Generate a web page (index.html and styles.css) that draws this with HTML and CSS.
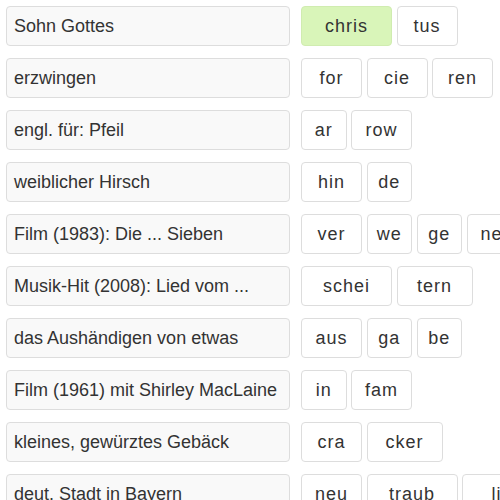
FILE: index.html
```html
<!DOCTYPE html>
<html lang="de">
<head>
<meta charset="utf-8">
<title>Silbenrätsel</title>
<link rel="stylesheet" href="styles.css">
</head>
<body>
<div class="puzzle">
  <div class="row">
    <div class="clue">Sohn Gottes</div>
    <div class="syllables"><span class="syl w5 used">chris</span><span class="syl w3">tus</span></div>
  </div>
  <div class="row">
    <div class="clue">erzwingen</div>
    <div class="syllables"><span class="syl w3">for</span><span class="syl w3">cie</span><span class="syl w3">ren</span></div>
  </div>
  <div class="row">
    <div class="clue">engl. für: Pfeil</div>
    <div class="syllables"><span class="syl w2">ar</span><span class="syl w3">row</span></div>
  </div>
  <div class="row">
    <div class="clue">weiblicher Hirsch</div>
    <div class="syllables"><span class="syl w3">hin</span><span class="syl w2">de</span></div>
  </div>
  <div class="row">
    <div class="clue">Film (1983): Die ... Sieben</div>
    <div class="syllables"><span class="syl w3">ver</span><span class="syl w2">we</span><span class="syl w2">ge</span><span class="syl w3">nen</span></div>
  </div>
  <div class="row">
    <div class="clue">Musik-Hit (2008): Lied vom ...</div>
    <div class="syllables"><span class="syl w5">schei</span><span class="syl w4">tern</span></div>
  </div>
  <div class="row">
    <div class="clue">das Aushändigen von etwas</div>
    <div class="syllables"><span class="syl w3">aus</span><span class="syl w2">ga</span><span class="syl w2">be</span></div>
  </div>
  <div class="row">
    <div class="clue">Film (1961) mit Shirley MacLaine</div>
    <div class="syllables"><span class="syl w2">in</span><span class="syl w3">fam</span></div>
  </div>
  <div class="row">
    <div class="clue">kleines, gewürztes Gebäck</div>
    <div class="syllables"><span class="syl w3">cra</span><span class="syl w4">cker</span></div>
  </div>
  <div class="row">
    <div class="clue">deut. Stadt in Bayern</div>
    <div class="syllables"><span class="syl w3">neu</span><span class="syl w5">traub</span><span class="syl w5">ling</span></div>
  </div>
</div>
</body>
</html>
```
FILE: styles.css
```css
html, body {
  margin: 0;
  padding: 0;
  background: #ffffff;
  overflow: hidden;
}

body {
  font-family: "Liberation Sans", Arial, sans-serif;
  font-size: 18px;
  color: #333333;
}

.puzzle {
  padding: 6px;
  display: flex;
  flex-direction: column;
  gap: 12px;
}

.row {
  display: flex;
  gap: 11px;
  white-space: nowrap;
}

.clue {
  box-sizing: border-box;
  flex: 0 0 284px;
  height: 40px;
  line-height: 38px;
  padding: 0 7px;
  background: #f9f9f9;
  border: 1px solid #dddddd;
  border-radius: 4px;
  overflow: hidden;
}

.syllables {
  display: flex;
  gap: 4.5px;
  flex-shrink: 0;
}

.syl {
  box-sizing: border-box;
  flex-shrink: 0;
  height: 40px;
  line-height: 38px;
  text-align: center;
  letter-spacing: 1px;
  background: #ffffff;
  border: 1px solid #dddddd;
  border-radius: 4px;
  color: #333333;
}

.syl.used {
  background: #d9f5b9;
  border-color: #d0ecb0;
}

.w2 { width: 45.5px; }
.w3 { width: 61px; }
.w4 { width: 76px; }
.w5 { width: 91px; }
```
